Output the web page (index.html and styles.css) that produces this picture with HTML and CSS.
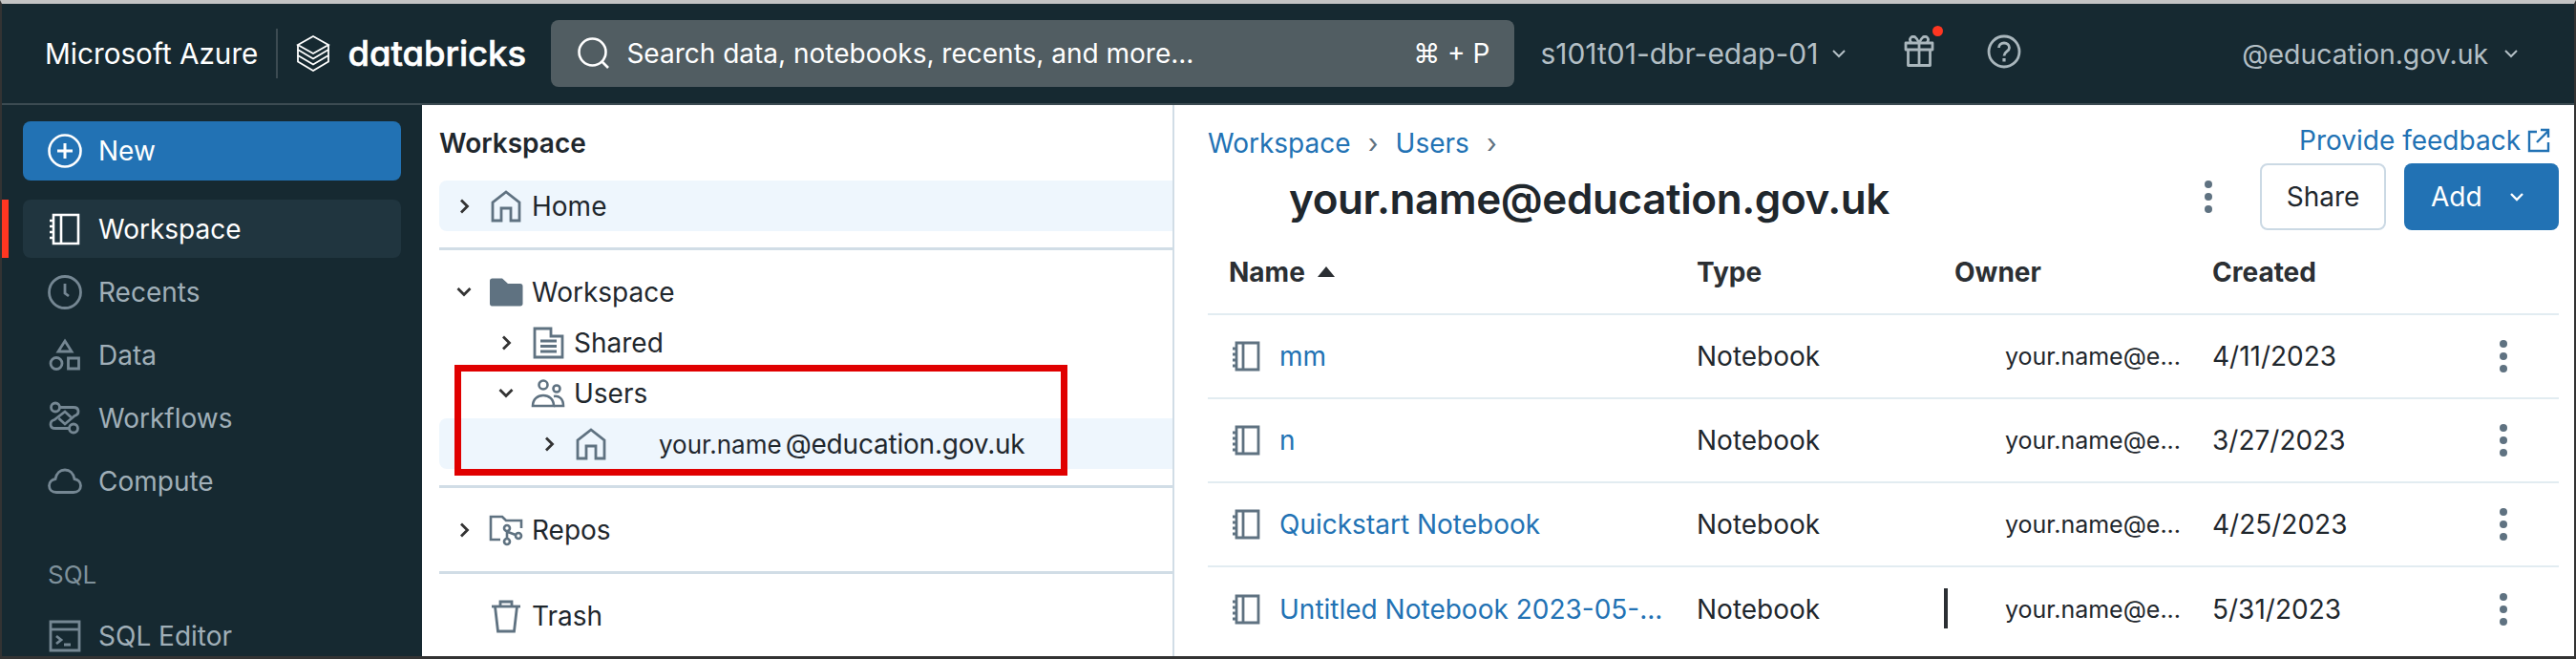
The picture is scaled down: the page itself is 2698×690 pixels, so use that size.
FILE: index.html
```html
<!DOCTYPE html>
<html lang="en">
<head>
    <meta charset="UTF-8">
    <title>Workspace - Databricks</title>
    <link rel="stylesheet" href="styles.css">
</head>
<body>
<div class="frame">
    <header class="topbar">
        <span class="azure">Microsoft Azure</span>
        <span class="brand-line"></span>
        <svg class="brand-icon" viewBox="0 0 36 38" fill="none" stroke="#fff" stroke-width="1.800">
            <path d="M18 1 34 10 18 19 2 10Z"/>
            <path d="M2 10V15L18 24.500 34 15V10"/>
            <path d="M2 15V21L18 30.500 34 21V15"/>
            <path d="M2 21V27.500L18 37 34 27.500V21"/>
        </svg>
        <span class="brand-name">databricks</span>
        <div class="search">
            <svg class="search-icon" viewBox="0 0 34 34" fill="none" stroke="#fff" stroke-width="2.600">
                <circle cx="15.500" cy="15.500" r="14"/>
                <path d="M25.500 25.500 32 32"/>
            </svg>
            <span class="search-text">Search data, notebooks, recents, and more...</span>
            <span class="search-key">⌘ + P</span>
        </div>
        <span class="wsname">s101t01-dbr-edap-01</span>
        <svg class="top-chev" viewBox="0 0 16 10" fill="none" stroke="#b3bfc5" stroke-width="2"><path d="M2 2 8 8 14 2"/></svg>
        <div class="gift">
            <svg viewBox="0 0 32 34" fill="none" stroke="#a9b6bc" stroke-width="2.800" stroke-linejoin="round">
                <path d="M2 8H30V15H2Z"/>
                <path d="M4.500 15V31.500H27.500V15"/>
                <path d="M16 8V31.500"/>
                <path d="M8 8C4 3 9 0 12 2 14 3.500 16 8 16 8 16 8 18 3.500 20 2 23 0 28 3 24 8"/>
            </svg>
            <span class="gift-dot"></span>
        </div>
        <svg class="help" viewBox="0 0 36 36" fill="none" stroke="#a9b6bc" stroke-width="2.800">
            <circle cx="18" cy="18" r="16"/>
            <path d="M12.500 14C12.500 11 15 9 18 9 21 9 23.500 11 23.500 14 23.500 18 18 18 18 22.500"/>
            <path d="M18 25V28.500" stroke-width="3.200"/>
        </svg>
        <span class="account">@education.gov.uk</span>
        <svg class="top-chev account-chev" viewBox="0 0 16 10" fill="none" stroke="#b3bfc5" stroke-width="2"><path d="M2 2 8 8 14 2"/></svg>
    </header>

    <div class="main">
        <nav class="sidebar">
            <a class="new-btn">
                <svg class="nav-icon" viewBox="0 0 36 36" fill="none" stroke="#fff" stroke-width="2.600">
                    <circle cx="18" cy="18" r="16.500"/>
                    <path d="M18 10V26M10 18H26" stroke-width="3"/>
                </svg>
                New
            </a>
            <a class="nav-item active">
                <svg class="nav-icon" viewBox="0 0 36 36" fill="none" stroke="#fff" stroke-width="2.600">
                    <path d="M6 3H32V33H6Z"/>
                    <path d="M14 3V33"/>
                    <path d="M2 9H6M2 15H6M2 21H6M2 27H6"/>
                </svg>
                Workspace
            </a>
            <a class="nav-item">
                <svg class="nav-icon" viewBox="0 0 36 36" fill="none" stroke="#758793" stroke-width="2.800">
                    <circle cx="18" cy="18" r="16.500"/>
                    <path d="M18 9V19L22 22"/>
                </svg>
                Recents
            </a>
            <a class="nav-item">
                <svg class="nav-icon" viewBox="0 0 36 36" fill="none" stroke="#758793" stroke-width="2.800">
                    <path d="M18 3 25 14H11Z"/>
                    <circle cx="9" cy="26.500" r="6"/>
                    <path d="M21.500 21H32.500V32H21.500Z"/>
                </svg>
                Data
            </a>
            <a class="nav-item">
                <svg class="nav-icon" viewBox="0 0 36 36" fill="none" stroke="#758793" stroke-width="2.800">
                    <circle cx="8" cy="6.500" r="4.500"/>
                    <circle cx="27" cy="28.500" r="4.500"/>
                    <path d="M12.500 6.500H27C33.500 6.500 33.500 14 28 15.500L18 24 11.500 18"/>
                    <path d="M22.500 28.500H8C1.500 28.500 1.500 21 7 19.500L18 11 24.500 17"/>
                </svg>
                Workflows
            </a>
            <a class="nav-item">
                <svg class="nav-icon" viewBox="0 0 36 36" fill="none" stroke="#758793" stroke-width="2.800">
                    <path d="M9 29.500C4.500 29.500 1.500 26.500 1.500 22.500 1.500 18.500 4.500 16 8 15.500 9 9.500 13 6 18 6 23 6 27 9.500 28 15.500 31.500 16 34.500 18.500 34.500 22.500 34.500 26.500 31.500 29.500 27 29.500Z"/>
                </svg>
                Compute
            </a>
            <div class="nav-label">SQL</div>
            <a class="nav-item">
                <svg class="nav-icon" viewBox="0 0 36 36" fill="none" stroke="#758793" stroke-width="2.800">
                    <path d="M3 3H33V33H3Z"/>
                    <path d="M3 11H33"/>
                    <path d="M9 18 14 22 9 26M17 27H24"/>
                </svg>
                SQL Editor
            </a>
        </nav>

        <section class="tree">
            <div class="tree-title">Workspace</div>

            <div class="tree-row selected">
                <span class="chev"><svg viewBox="0 0 13 18" class="chev-r"><path d="M3 2.500 9.500 9 3 15.500"/></svg></span>
                <svg class="tree-icon" viewBox="0 0 36 36" fill="none" stroke="#5f7281" stroke-width="2.800"><path d="M4 33V14L18 3 32 14V33H23V20H13V33Z"/></svg>
                <span class="tree-name">Home</span>
            </div>
            <div class="tree-line"></div>

            <div class="tree-row">
                <span class="chev"><svg viewBox="0 0 18 13" class="chev-d"><path d="M2.500 3 9 9.500 15.500 3"/></svg></span>
                <svg class="tree-icon" viewBox="0 0 36 30" fill="#5f7281"><path d="M1 3C1 1.500 2 .5 3.500 .5H14L20 6H33C34.500 6 35.500 7 35.500 8.500V27C35.500 28.500 34.500 29.500 33 29.500H3C2 29.500 1 28.500 1 27Z"/></svg>
                <span class="tree-name">Workspace</span>
            </div>
            <div class="tree-row depth-1">
                <span class="chev"><svg viewBox="0 0 13 18" class="chev-r"><path d="M3 2.500 9.500 9 3 15.500"/></svg></span>
                <svg class="tree-icon" viewBox="0 0 36 36" fill="none" stroke="#5f7281" stroke-width="2.800"><path d="M4 3H21V11H33V33H4Z"/><path d="M10 16H27M10 21.500H27M10 27H27"/></svg>
                <span class="tree-name">Shared</span>
            </div>
            <div class="tree-row depth-1">
                <span class="chev"><svg viewBox="0 0 18 13" class="chev-d"><path d="M2.500 3 9 9.500 15.500 3"/></svg></span>
                <svg class="tree-icon" viewBox="0 0 36 30" fill="none" stroke="#5f7281" stroke-width="2.600"><circle cx="13" cy="6" r="4.500"/><circle cx="27" cy="10" r="3.500"/><path d="M2 28C2 21 7 17 13 17 19 17 24 21 24 28Z"/><path d="M24 18C29 17 34 20 34 28H24"/></svg>
                <span class="tree-name">Users</span>
            </div>
            <div class="tree-row depth-2 selected">
                <span class="chev"><svg viewBox="0 0 13 18" class="chev-r"><path d="M3 2.500 9.500 9 3 15.500"/></svg></span>
                <svg class="tree-icon" viewBox="0 0 36 36" fill="none" stroke="#5f7281" stroke-width="2.800"><path d="M4 33V14L18 3 32 14V33H23V20H13V33Z"/></svg>
                <span class="tree-name user-name"><span class="user-part">your.name</span>@education.gov.uk</span>
            </div>
            <div class="tree-line"></div>

            <div class="tree-row">
                <span class="chev"><svg viewBox="0 0 13 18" class="chev-r"><path d="M3 2.500 9.500 9 3 15.500"/></svg></span>
                <svg class="tree-icon" viewBox="0 0 36 32" fill="none" stroke="#5f7281" stroke-width="2.600"><path d="M12 26H2V2H14L18 6H34V14"/><circle cx="19" cy="28" r="3"/><circle cx="31" cy="22" r="3"/><circle cx="19" cy="14" r="3"/><path d="M19 17V25M20 18 28 21"/></svg>
                <span class="tree-name">Repos</span>
            </div>
            <div class="tree-line"></div>

            <div class="tree-row">
                <span class="chev"></span>
                <svg class="tree-icon" viewBox="0 0 36 36" fill="none" stroke="#5f7281" stroke-width="2.800"><path d="M3 8H33"/><path d="M12 8V3H24V8"/><path d="M6.500 8 9.500 34H26.500L29.500 8"/></svg>
                <span class="tree-name">Trash</span>
            </div>

            <div class="callout"></div>
        </section>

        <section class="content">
            <div class="crumb-row">
                <div class="crumbs">
                    <a>Workspace</a><span class="crumb-sep">›</span><a>Users</a><span class="crumb-sep">›</span>
                </div>
                <a class="feedback">Provide feedback
                    <svg viewBox="0 0 24 26" fill="none" stroke="#2272b4" stroke-width="2.400"><path d="M10 4H2V24H22V15"/><path d="M10 15 22 3M14 2H22V10"/></svg>
                </a>
            </div>
            <div class="title-row">
                <h1 class="title">your.name@education.gov.uk</h1>
                <span class="dots"><i></i><i></i><i></i></span>
                <button class="btn-share">Share</button>
                <button class="btn-add">Add
                    <svg viewBox="0 0 18 12" fill="none" stroke="#fff" stroke-width="2.400"><path d="M3 3 9 9 15 3"/></svg>
                </button>
            </div>

            <div class="grid-row grid-head">
                <div class="col-name">Name <span class="sort"></span></div>
                <div>Type</div>
                <div>Owner</div>
                <div>Created</div>
            </div>
            <div class="grid-row">
                <div class="col-name"><svg class="nb" viewBox="0 0 30 32" fill="none" stroke="#5f7281" stroke-width="2.800"><path d="M5 2H28V30H5Z"/><path d="M12 2V30"/><path d="M1 8H5M1 14H5M1 20H5M1 26H5"/></svg><a>mm</a></div>
                <div>Notebook</div>
                <div class="col-owner">your.name@e...</div>
                <div>4/11/2023</div>
                <span class="dots"><i></i><i></i><i></i></span>
            </div>
            <div class="grid-row">
                <div class="col-name"><svg class="nb" viewBox="0 0 30 32" fill="none" stroke="#5f7281" stroke-width="2.800"><path d="M5 2H28V30H5Z"/><path d="M12 2V30"/><path d="M1 8H5M1 14H5M1 20H5M1 26H5"/></svg><a>n</a></div>
                <div>Notebook</div>
                <div class="col-owner">your.name@e...</div>
                <div>3/27/2023</div>
                <span class="dots"><i></i><i></i><i></i></span>
            </div>
            <div class="grid-row">
                <div class="col-name"><svg class="nb" viewBox="0 0 30 32" fill="none" stroke="#5f7281" stroke-width="2.800"><path d="M5 2H28V30H5Z"/><path d="M12 2V30"/><path d="M1 8H5M1 14H5M1 20H5M1 26H5"/></svg><a>Quickstart Notebook</a></div>
                <div>Notebook</div>
                <div class="col-owner">your.name@e...</div>
                <div>4/25/2023</div>
                <span class="dots"><i></i><i></i><i></i></span>
            </div>
            <div class="grid-row last">
                <div class="col-name"><svg class="nb" viewBox="0 0 30 32" fill="none" stroke="#5f7281" stroke-width="2.800"><path d="M5 2H28V30H5Z"/><path d="M12 2V30"/><path d="M1 8H5M1 14H5M1 20H5M1 26H5"/></svg><a>Untitled Notebook 2023-05-...</a></div>
                <div class="col-type">Notebook<span class="resize-bar"></span></div>
                <div class="col-owner">your.name@e...</div>
                <div>5/31/2023</div>
                <span class="dots"><i></i><i></i><i></i></span>
            </div>
        </section>
    </div>
</div>
</body>
</html>
```
FILE: styles.css
```css
html, body {
    margin: 0;
    padding: 0;
    height: 100%;
    overflow: hidden;
}
body {
    font-family: Inter, "Liberation Sans", sans-serif;
    font-size: 28px;
    color: #1f272d;
    background: #fff;
}
.frame {
    height: 690px;
    box-sizing: border-box;
    border-top: 4px solid #c4c4c4;
    border-left: 2px solid #333;
    border-right: 2px solid #333;
    border-bottom: 3px solid #333;
    display: flex;
    flex-direction: column;
    overflow: hidden;
}

/* top bar */
.topbar {
    height: 106px;
    flex: none;
    box-sizing: border-box;
    border-bottom: 2px solid #3c4b52;
    background: #162931;
    display: flex;
    align-items: center;
    color: #fff;
}
.azure {
    margin-left: 45px;
    font-size: 29.7px;
}
.brand-line {
    width: 2px;
    height: 52px;
    margin-left: 19px;
    background: #3c4b52;
}
.brand-icon {
    width: 36px;
    height: 38px;
    margin-left: 19px;
}
.brand-name {
    width: 188px;
    margin-left: 18px;
    font-size: 36.4px;
    font-weight: 500;
    font-feature-settings: "cv11";
    -webkit-text-stroke: .6px #fff;
}
.search {
    width: 1009px;
    height: 70px;
    margin-left: 25px;
    padding: 0 26px 0 28px;
    box-sizing: border-box;
    background: #515d62;
    border-radius: 8px;
    display: flex;
    align-items: center;
}
.search-icon {
    width: 34px;
    height: 34px;
}
.search-text {
    flex: 1;
    margin-left: 17px;
    font-size: 28px;
}
.search-key {
    font-size: 28px;
}
.wsname {
    margin-left: 27px;
    font-size: 30px;
    color: #b3bfc5;
}
.top-chev {
    width: 16px;
    height: 10px;
    margin-left: 14px;
}
.gift {
    position: relative;
    width: 32px;
    height: 34px;
    margin-left: 60px;
    margin-bottom: 4px;
}
.gift svg {
    width: 32px;
    height: 34px;
    display: block;
}
.gift-dot {
    position: absolute;
    top: -10px;
    right: -9px;
    width: 11px;
    height: 11px;
    border-radius: 50%;
    background: #ff3621;
}
.help {
    width: 36px;
    height: 36px;
    margin-left: 55px;
    margin-bottom: 5px;
}
.account {
    margin-left: auto;
    font-size: 28.4px;
    color: #b3bfc5;
}
.account-chev {
    margin-right: 58px;
    margin-left: 16px;
}

/* main area */
.main {
    flex: 1;
    display: flex;
    min-height: 0;
}

/* sidebar */
.sidebar {
    width: 440px;
    flex: none;
    box-sizing: border-box;
    padding: 17px 22px 0;
    background: #162931;
    color: #a0afb8;
    position: relative;
}
.new-btn {
    height: 62px;
    margin-bottom: 20px;
    padding-left: 26px;
    border-radius: 8px;
    background: #2272b4;
    color: #fff;
    display: flex;
    align-items: center;
}
.nav-item {
    height: 61px;
    margin-bottom: 5px;
    padding-left: 26px;
    border-radius: 8px;
    display: flex;
    align-items: center;
}
.nav-icon {
    width: 36px;
    height: 36px;
    margin-right: 17px;
    flex: none;
}
.nav-item.active {
    position: relative;
    background: #20353f;
    color: #fff;
}
.nav-item.active::before {
    content: "";
    position: absolute;
    left: -22px;
    top: 0;
    bottom: 0;
    width: 7px;
    background: #ff3621;
}
.nav-label {
    height: 30px;
    line-height: 30px;
    margin: 53px 0 18px 26px;
    font-size: 26px;
    color: #7f919b;
}

/* workspace tree */
.tree {
    width: 788px;
    flex: none;
    box-sizing: border-box;
    padding: 17px 0 0 18px;
    border-right: 2px solid #d1dde6;
    position: relative;
}
.tree-title {
    height: 46px;
    line-height: 46px;
    margin-bottom: 16px;
    font-weight: 600;
}
.tree-row {
    height: 53px;
    padding-left: 9px;
    display: flex;
    align-items: center;
}
.tree-row.depth-1 {
    padding-left: 53px;
}
.tree-row.depth-2 {
    padding-left: 98px;
}
.tree-row.selected {
    background: #eef6fd;
    border-radius: 8px 0 0 8px;
}
.chev {
    width: 34px;
    height: 34px;
    flex: none;
    display: flex;
    align-items: center;
    justify-content: center;
}
.chev svg {
    fill: none;
    stroke: #333;
    stroke-width: 2.800;
}
.chev-r {
    width: 13px;
    height: 18px;
}
.chev-d {
    width: 18px;
    height: 13px;
}
.tree-icon {
    width: 36px;
    height: 36px;
    flex: none;
    margin-left: 9px;
}
.tree-name {
    margin-left: 9px;
}
.user-name {
    margin-left: 53px;
    letter-spacing: -.2px;
}
.user-part {
    font-size: 26px;
    margin-right: 4px;
    letter-spacing: 0;
}
.tree-line {
    height: 3px;
    margin: 17px 0;
    background: #d1dde6;
}
.callout {
    position: absolute;
    left: 34px;
    top: 272px;
    width: 642px;
    height: 116px;
    box-sizing: border-box;
    border: 7px solid #e00000;
    pointer-events: none;
}

/* right content */
.content {
    flex: 1;
    min-width: 0;
    padding: 17px 16px 0 35px;
}
.crumb-row {
    height: 44px;
    display: flex;
    justify-content: space-between;
    color: #2272b4;
}
.crumbs {
    height: 46px;
    line-height: 46px;
    display: flex;
}
.crumb-sep {
    width: 47px;
    text-align: center;
    color: #5f7281;
}
.feedback {
    height: 40px;
    line-height: 40px;
    margin-right: 9px;
    display: flex;
    align-items: center;
    gap: 7px;
}
.feedback svg {
    width: 24px;
    height: 26px;
}
.title-row {
    height: 70px;
    display: flex;
    align-items: center;
}
.title {
    margin: 4px auto 0 85px;
    font-size: 44px;
    font-weight: 600;
    letter-spacing: -.4px;
}
.dots {
    display: flex;
    flex-direction: column;
    gap: 5px;
    width: 8px;
}
.dots i {
    width: 8px;
    height: 8px;
    border-radius: 50%;
    background: #5f7281;
}
.title-row .dots {
    margin-right: 50px;
}
.btn-share,
.btn-add {
    height: 70px;
    font: inherit;
    border-radius: 8px;
}
.btn-share {
    width: 132px;
    background: #fff;
    border: 2px solid #cbd9e4;
    color: #1f272d;
}
.btn-add {
    width: 162px;
    margin-left: 19px;
    background: #2272b4;
    border: none;
    color: #fff;
    display: flex;
    align-items: center;
    padding-left: 28px;
}
.btn-add svg {
    width: 18px;
    height: 12px;
    margin-left: 27px;
}
.grid-row {
    display: grid;
    grid-template-columns: 512px 270px 270px 301px 1fr;
    align-items: center;
    height: 88px;
    box-sizing: border-box;
    border-bottom: 2px solid #e2ecf1;
}
.grid-row.last {
    border-bottom: none;
}
.grid-head {
    height: 89px;
    font-weight: 700;
    color: #2b2f33;
}
.col-name {
    padding-left: 22px;
    display: flex;
    align-items: center;
}
.sort {
    width: 0;
    height: 0;
    margin-left: 13px;
    border-left: 9px solid transparent;
    border-right: 9px solid transparent;
    border-bottom: 11px solid #2b2f33;
}
.nb {
    width: 30px;
    height: 32px;
    margin: 0 20px 0 3px;
    flex: none;
}
.col-name a {
    color: #2272b4;
    white-space: nowrap;
}
.col-owner {
    padding-left: 53px;
    font-size: 25px;
    white-space: nowrap;
}
.col-type {
    position: relative;
}
.resize-bar {
    position: absolute;
    left: 259px;
    top: -5px;
    width: 4px;
    height: 42px;
    background: #2b2f33;
}
```
